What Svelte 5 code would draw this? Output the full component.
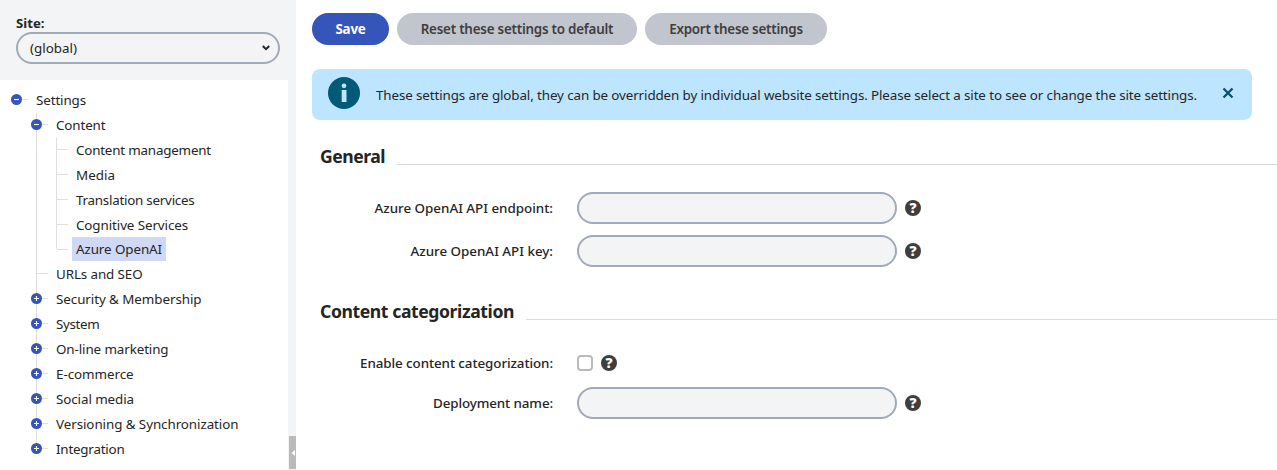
<script>
  const topics = [
    { text: 'Content management', w: 135 },
    { text: 'Media', w: 39 },
    { text: 'Translation services', w: 118.5 },
    { text: 'Cognitive Services', w: 112 },
    { text: 'Azure OpenAI', w: 86, selected: true }
  ];
  const categories = [
    { text: 'URLs and SEO', w: 86.5, leaf: true },
    { text: 'Security & Membership', w: 145.5 },
    { text: 'System', w: 43.5 },
    { text: 'On-line marketing', w: 112.5 },
    { text: 'E-commerce', w: 77.5 },
    { text: 'Social media', w: 78 },
    { text: 'Versioning & Synchronization', w: 182.5 },
    { text: 'Integration', w: 68.5 }
  ];
  const general = [
    { text: 'Azure OpenAI API endpoint:', w: 178.5 },
    { text: 'Azure OpenAI API key:', w: 142.5 }
  ];

  // Tracks the text so that it fills the given width.
  function fit(node, width) {
    const natural = node.getBoundingClientRect().width;
    const gap = (width - natural) / node.textContent.length;
    node.style.letterSpacing = gap.toFixed(3) + 'px';
  }
</script>

{#snippet toggle(open)}
  <svg class="toggle" width="11" height="11" viewBox="0 0 11 11">
    <circle cx="5.5" cy="5.5" r="5.5" fill="#3655ba" />
    <path d={open ? 'M3 5.5H8' : 'M3 5.5H8M5.5 3V8'} stroke="#fff" stroke-width="1.1" />
  </svg>
{/snippet}

{#snippet help()}
  <span class="help">?</span>
{/snippet}

<div class="page">
  <aside>
    <div class="site">
      <label for="site"><span use:fit={28.5}>Site:</span></label>
      <button id="site" class="select">
        <span use:fit={47}>(global)</span>
        <svg width="8" height="6" viewBox="0 0 8 6"><path d="M0.8 1L4 4.2L7.2 1" fill="none" stroke="#1f2228" stroke-width="1.9" /></svg>
      </button>
    </div>
    <div class="lower">
      <nav>
        <div class="row root">{@render toggle(true)}<i></i><span use:fit={50}>Settings</span></div>
        <div class="branch outer">
          <div class="row">{@render toggle(true)}<i></i><span use:fit={49.5}>Content</span></div>
          <div class="branch inner">
            {#each topics as t}
              <div class="row leaf" class:selected={t.selected}><i></i><b><span use:fit={t.w}>{t.text}</span></b></div>
            {/each}
          </div>
          {#each categories as c}
            <div class="row" class:leaf={c.leaf}>
              {#if !c.leaf}{@render toggle(false)}{/if}<i></i><span use:fit={c.w}>{c.text}</span>
            </div>
          {/each}
        </div>
      </nav>
      <div class="splitter">
        <div class="handle"><svg width="4" height="6" viewBox="0 0 4 6"><path d="M4 0V6L0.5 3Z" fill="#fff" /></svg></div>
      </div>
    </div>
  </aside>

  <main>
    <div class="actions">
      <button class="primary"><span use:fit={30}>Save</span></button>
      <button class="reset"><span use:fit={192.5}>Reset these settings to default</span></button>
      <button class="export"><span use:fit={133.5}>Export these settings</span></button>
    </div>

    <div class="banner">
      <svg class="info" width="32" height="32" viewBox="0 0 32 32">
        <circle cx="16" cy="16" r="16" fill="#025a77" />
        <circle cx="16" cy="8.8" r="2.4" fill="#bde5ff" />
        <rect x="13.7" y="13" width="4.8" height="12" fill="#bde5ff" />
      </svg>
      <p><span use:fit={821}>These settings are global, they can be overridden by individual website settings. Please select a site to see or change the site settings.</span></p>
      <svg class="close" width="12" height="12" viewBox="0 0 12 12"><path d="M1.5 1.5L10.5 10.5M10.5 1.5L1.5 10.5" stroke="#07536e" stroke-width="2.3" /></svg>
    </div>

    <section class="general">
      <h2><span use:fit={65}>General</span></h2>
      {#each general as g}
        <div class="field"><label><span use:fit={g.w}>{g.text}</span><input type="text" /></label>{@render help()}</div>
      {/each}
    </section>

    <section class="content">
      <h2><span use:fit={194}>Content categorization</span></h2>
      <div class="field check"><label><span use:fit={193}>Enable content categorization:</span><input type="checkbox" /></label>{@render help()}</div>
      <div class="field"><label><span use:fit={120}>Deployment name:</span><input type="text" /></label>{@render help()}</div>
    </section>
  </main>
</div>

<style>
  :global(body) { background: #fff; overflow: hidden; }
  .page {
    display: flex; width: 1277px; height: 470px; overflow: hidden;
    font: 13.4px/20px "Noto Sans", "Open Sans", sans-serif; color: #262524;
  }
  .page * { box-sizing: border-box; }
  span { white-space: nowrap; }
  button { font: inherit; color: inherit; padding: 0; border: 0; }
  svg { display: block; flex: none; }

  aside { width: 296px; flex: none; display: flex; flex-direction: column; }
  .site { height: 80px; background: #f2f4f5; padding: 14px 16px 16px; display: flex; flex-direction: column; }
  .site label { height: 18px; line-height: 18px; font-weight: 700; font-size: 13.2px; }
  .select {
    width: 264px; height: 32px; border: 2px solid #a1aab8; border-radius: 16px; background: #f2f4f5;
    display: flex; align-items: center; justify-content: space-between; padding: 0 8px 0 12px;
  }
  .lower { flex: 1; display: flex; min-height: 0; }
  nav { width: 288px; padding: 7px 0 0 11px; }
  .row { display: flex; align-items: center; height: 25px; }
  .row b { font-weight: 400; }
  .row i { width: 6px; height: 1px; background: #dfdfdf; margin-right: 8px; }
  .branch { position: relative; padding-left: 20px; }
  .branch::before { content: ""; position: absolute; width: 1px; top: 1px; bottom: 12px; left: 25px; background: #dfdfdf; }
  .toggle { position: relative; }
  .leaf i { width: 11px; margin-left: 6px; }
  .inner b { display: block; margin-left: -4px; padding: 0 4px; height: 24px; line-height: 24px; }
  .selected { height: 24px; }
  .selected b { background: #cfd8f5; }
  .splitter { width: 8px; background: #f2f4f5; display: flex; align-items: flex-end; justify-content: flex-end; padding-bottom: 1px; }
  .handle { width: 7px; height: 33px; background: #bababa; display: flex; align-items: center; justify-content: center; }

  main { flex: 1; min-width: 0; padding: 13px 0 0 16px; }
  .actions { display: flex; gap: 8px; height: 32px; font-weight: 600; }
  .actions button { height: 32px; border-radius: 16px; background: #c1c5ce; color: #403e3d; }
  .actions .primary { width: 77px; background: #3655ba; color: #fff; font-weight: 700; }
  .actions .reset { width: 240px; }
  .actions .export { width: 182px; }
  .banner {
    width: 940px; height: 51px; margin-top: 24px; border-radius: 8px; background: #bde5ff;
    display: flex; align-items: flex-start; padding: 8px 0 0 16px;
  }
  p { margin: 8px 0 0 16px; width: 846px; }
  .close { margin-top: 10px; }

  section { padding-left: 8px; }
  .general { margin-top: 25px; }
  .content { margin-top: 33px; }
  h2 {
    margin: 0; height: 23px; font-size: 17.6px; line-height: 22px; font-weight: 700;
    display: flex; gap: 12px;
  }
  h2::after { content: ""; flex: 1; height: 1px; margin-top: 19px; background: #d9dade; }
  .field { display: flex; align-items: center; height: 32px; margin-top: 11px; font-weight: 550; }
  h2 + .field { margin-top: 24px; }
  .field label { width: 577px; display: flex; align-items: center; justify-content: flex-end; }
  .field input { margin: 0 0 0 24px; background: #f2f4f5; }
  input[type='text'] { width: 320px; height: 32px; border: 2px solid #a1aab8; border-radius: 16px; }
  input[type='checkbox'] { appearance: none; width: 16px; height: 16px; border: 2px solid #bababa; border-radius: 4px; background: #fff; }
  .check label { width: 273px; }
  .check + .field { margin-top: 8px; }
  .help {
    width: 16px; height: 16px; margin-left: 8px; border-radius: 50%; background: #403e3d; color: #fff;
    font: 800 14px/16px "Open Sans", "Noto Sans", sans-serif; text-align: center;
  }
</style>
